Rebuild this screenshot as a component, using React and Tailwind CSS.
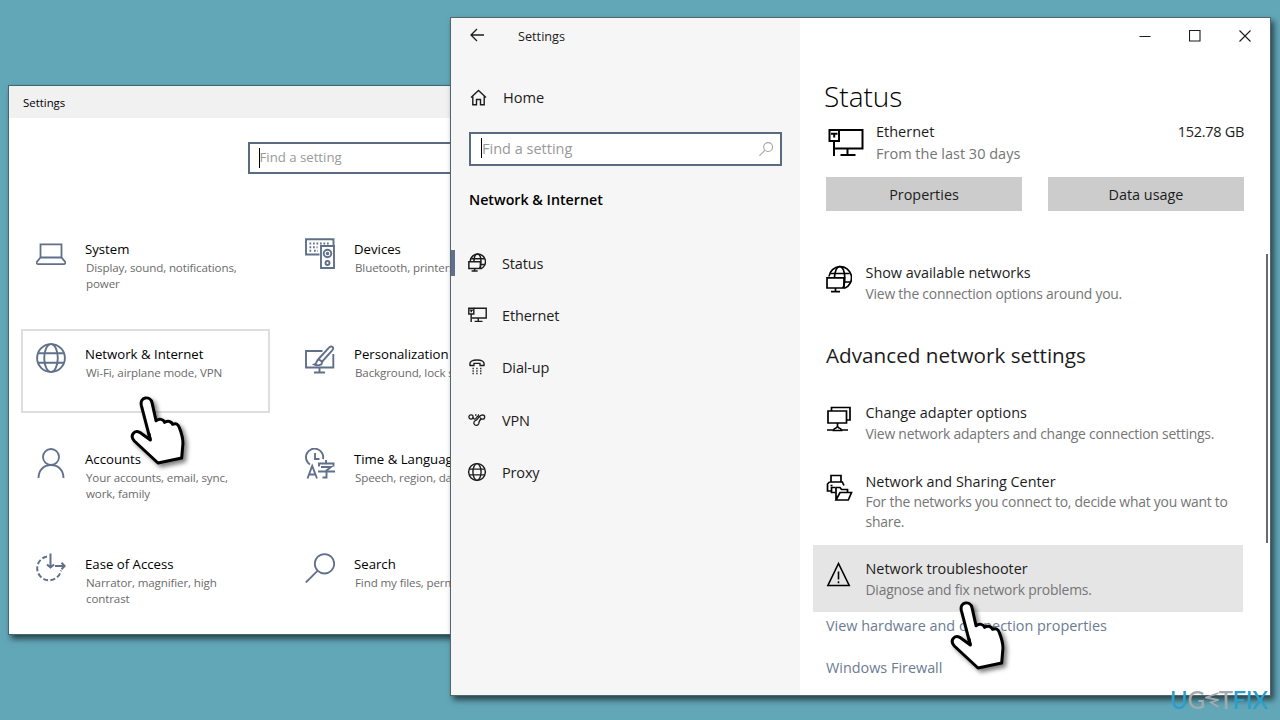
const tiles = [
  { icon: LaptopIcon, title: 'System', text: 'Display, sound, notifications, power' },
  { icon: DevicesIcon, title: 'Devices', text: 'Bluetooth, printers, mouse' },
  { icon: GlobeIcon, title: 'Network & Internet', text: 'Wi-Fi, airplane mode, VPN', active: true },
  { icon: BrushIcon, title: 'Personalization', text: 'Background, lock screen' },
  { icon: UserIcon, title: 'Accounts', text: 'Your accounts, email, sync, work, family' },
  { icon: LanguageIcon, title: 'Time & Language', text: 'Speech, region, date' },
  { icon: EaseIcon, title: 'Ease of Access', text: 'Narrator, magnifier, high contrast' },
  { icon: SearchIcon, title: 'Search', text: 'Find my files, permissions' },
];

const navItems = [
  { icon: NetworkIcon, label: 'Status', active: true },
  { icon: EthernetIcon, label: 'Ethernet' },
  { icon: DialIcon, label: 'Dial-up' },
  { icon: VpnIcon, label: 'VPN' },
  { icon: GlobeIcon, label: 'Proxy' },
];

function Svg({ box, className, width = 1.5, children }) {
  return (
    <svg viewBox={box} className={className} fill="none" stroke="currentColor" strokeWidth={width}>
      {children}
    </svg>
  );
}

function LaptopIcon() {
  return (
    <Svg box="0 0 30 30" className="size-[30px] translate-y-px" width={1.8}>
      <path d="M4.500 18V5.300h21V18M4.500 18.500h21l3.700 4.500c.4 1.400-.2 2.200-1.400 2.200H2.200C1 25.200.4 24.400.8 23z" />
    </Svg>
  );
}

function DevicesIcon() {
  return (
    <Svg box="0 0 30 32" className="h-8 w-[30px]" width={1.9}>
      <path d="M14.500 16.500H1V1.300h27.500v6M16 8h13v22H16z" />
      <path d="M4.500 5.500h21M4.500 9.200h8M4.500 12.800h2M9 12.800h4" strokeDasharray="1.700 1.800" />
      <circle cx="22.500" cy="15.500" r="3.800" />
      <circle cx="22.500" cy="25" r="2" />
      <circle cx="22.500" cy="15.500" r=".8" />
    </Svg>
  );
}

function GlobeIcon({ small }) {
  return (
    <Svg box="0 0 30 30" className={small ? 'size-[18px]' : 'size-[30px]'} width={small ? 2.3 : 1.9}>
      <circle cx="15" cy="15" r="13.900" />
      <ellipse cx="15" cy="15" rx="6.800" ry="13.900" />
      <path d="M2 10.300h26M2 19.700h26" />
    </Svg>
  );
}

function BrushIcon() {
  return (
    <Svg box="0 0 30 30" className="size-[30px] translate-y-0.5" width={1.9}>
      <path d="M17.500 6H1v16.500h27.300V9M14.500 22.500V27M9 27.500h11" />
      <path d="m13.500 14 10.700-11.600c2.600-2.300 5.300.300 3 3L17 16.800c.5 3-3 4.600-7.500 2.700 2.300-.7 1.800-3.500 4-5.500l3.500 2.800" />
    </Svg>
  );
}

function UserIcon() {
  return (
    <Svg box="0 0 30 32" className="h-8 w-[30px]" width={1.8}>
      <circle cx="15" cy="9" r="8" />
      <path d="M2.500 30c0-8 5.500-13 12.500-13s12.500 5 12.500 13" />
    </Svg>
  );
}

function LanguageIcon() {
  return (
    <Svg box="0 0 30 32" className="h-8 w-[30px]" width={1.9}>
      <path d="M5 16.500A8.600 8.600 0 1 1 18 11M10 5v6h4.500" />
      <path d="m2.500 30.500 4.700-12.500L12 30.500M4 26.500h6.500" />
      <path d="M21 12v3M14 18.500v-3h14.500v3M16 19h10l-4.500 3.500v7h-4M13 23.500h17" />
    </Svg>
  );
}

function EaseIcon() {
  return (
    <Svg box="0 0 30 30" className="size-[30px]" width={2}>
      <path d="M11 3.500A12 12 0 1 0 25 17.500" strokeDasharray="5 2.300" />
      <path d="M14.500.500v14M11 11.500l3.500 3 3.500-3M19 13h9.500M25.500 9.800 28.700 13l-3.200 3.200" />
    </Svg>
  );
}

function SearchIcon() {
  return (
    <Svg box="0 0 30 30" className="size-[30px]" width={1.8}>
      <circle cx="19.500" cy="10.800" r="9.700" />
      <path d="M12.500 17.800.800 29.500" />
    </Svg>
  );
}

function NetworkIcon({ small }) {
  return (
    <Svg box="0 0 26 28" className={small ? 'h-[19px] w-[18px]' : 'h-7 w-[26px]'} width={small ? 2.2 : 1.7}>
      <path d="M3 11.500A11.300 11.300 0 1 1 18.500 23.300" />
      <path d="M8.500 12c.3-6 2.500-10.500 5-10.500 3.200 0 5.300 5 5.300 11 0 4.500-.5 8-2 10.500M4.500 8.500h19M18.500 17h5.500" />
      <path d="M1 12.800h17V23H1zM9.500 23v3.500M5 26.700h9" />
    </Svg>
  );
}

function EthernetIcon({ small }) {
  return (
    <Svg box="0 0 36 28" className={small ? 'h-[15px] w-[19px]' : 'h-7 w-9'} width={small ? 2.7 : 2}>
      <path d="M11 2h23.500v18.500H7M19.500 20.500V27M12.500 27h15" />
      <path d="M1.500 2h9.500v11H1.500zM6 13v15" />
      <path d="M3 5.700h6.500M6.200 6v3.500" />
    </Svg>
  );
}

function DialIcon() {
  return (
    <Svg box="0 0 18 18" className="size-[18px]" width={1.3}>
      <path d="M2 7.500C1 3 5 2 9 2s8 1 7 5.500h-4V5.300H6v2.200z" />
      <path d="M4.500 10.500h9M4.500 13h9M4.500 15.500h9" strokeDasharray="1.300 2.500" />
    </Svg>
  );
}

function VpnIcon() {
  return (
    <Svg box="0 0 18 16" className="h-4 w-[18px]" width={1.3}>
      <circle cx="3" cy="5" r="2.100" />
      <path d="M5 5.500c.8 2.200 2.500 2 3.500.2.900-1.700 1.900-2 2.700-1.500" />
      <path d="M7.500 8.500a2.500 2.500 0 1 0 3.200 3.200c.4-2 .9-4.200 2.800-4.700M7.500 8.500c2.800-.7 3.300-5.600 7-5.700a2.200 2.200 0 0 1 0 4.400c-1.200 0-2-.7-2.300-1.700" />
      <path d="M7 3h1.500M10 3h1" />
    </Svg>
  );
}

function AdapterIcon() {
  return (
    <Svg box="0 0 26 28" className="h-7 w-[26px]" width={1.7}>
      <path d="M2 6h18.500v12H2zM5.500 6V2.500H24V15h-3.500M11.500 18v3.500M1 25h6.500M15.500 25H22M7.500 25.500c.3-1.700 1.500-2.300 2.500-2.500l1.500-1.500L13 23c1 .2 2.200.8 2.500 2.500z" />
    </Svg>
  );
}

function SharingIcon() {
  return (
    <Svg box="0 0 27 28" className="h-7 w-[27px]" width={1.7}>
      <path d="M5 8V1.500h10V8M3.500 8h12.800l1.700 3.500M5.500 17h-4v-7l2-2M4.500 11.500h2M9 13.500H5.500v5h4" />
      <path d="M10 25.500V13.500h4l1.500 2h6v3.500M10 26l4-7.500h11.500l-3.200 7.500z" />
    </Svg>
  );
}

function WarningIcon() {
  return (
    <Svg box="0 0 26 28" className="h-7 w-[26px]" width={1.6}>
      <path d="M12.500 2.500 23.200 24.500H1.900zM12.500 10.500v8M12.500 20.300v2" />
    </Svg>
  );
}

function Hand({ className }) {
  return (
    <svg viewBox="0 0 180 225" className={`absolute h-[75px] w-[60px] drop-shadow-[3px_3px_2px_rgba(0,0,0,0.5)] ${className}`}>
      <path
        d="M70 138 43 34C37 8 70 4 75 26l12 54c10-7 22-5 26 5 10-6 20-3 24 6 11-4 17 0 20 10 8 20 13 38 10 56l-3 35-71 15-71-66c-15-16 0-34 16-26z"
        fill="#fff"
        stroke="#000"
        strokeWidth="9"
        strokeLinejoin="round"
      />
      <path d="m70 138-4-19" stroke="#000" strokeWidth="9" />
    </svg>
  );
}

function SettingsHome() {
  return (
    <div className="absolute left-[9px] top-[86px] h-[548px] w-[560px] bg-white shadow-[0_0_0_1px_#3f6873,3px_4px_6px_1px_rgba(0,0,0,0.6)]">
      <div className="flex h-8 items-center bg-[#f1f1f1] pl-3.5 pt-px text-[11.400px] text-black">Settings</div>
      <div className="ml-[238.500px] mt-6 flex h-8 w-[300px] items-center border-2 border-[#5a6a80] pl-[9px]">
        <span className="h-5 w-px bg-black" />
        <span className="text-[13.200px] text-[#999]">Find a setting</span>
      </div>
      <div className="ml-3 mt-[50px] grid grid-cols-[269px_269px] gap-y-[21px]">
        {tiles.map(({ icon: Icon, title, text, active }) => (
          <div
            key={title}
            className={`flex h-[84px] w-[249px] border-2 pl-[13px] pt-3 ${active ? 'border-[#dedede]' : 'border-transparent'}`}
          >
            <div className="w-[49px] shrink-0 text-[#61708a]">
              <Icon />
            </div>
            <div className="w-40 pt-px">
              <div className="whitespace-nowrap text-[13.200px] leading-5 text-black">{title}</div>
              <div className="mt-px pl-px text-[11.600px] leading-4 tracking-[-0.13px] text-[#6b6b6b]">{text}</div>
            </div>
          </div>
        ))}
      </div>
    </div>
  );
}

function Sidebar() {
  return (
    <div className="w-[349px] shrink-0 bg-[#f6f6f6]">
      <div className="flex h-9 items-center pl-[19px]">
        <Svg box="0 0 15 14" className="-mt-0.5 h-3.5 w-[15px]" width={1.3}>
          <path d="M14 7H1M7 1 1 7l6 6" />
        </Svg>
        <span className="ml-[33px] pt-0.5 text-[12.700px]">Settings</span>
      </div>
      <div className="mt-[27px] flex h-8 items-center pl-[19px]">
        <Svg box="0 0 17 17" className="size-[17px]" width={1.4}>
          <path d="M1 8.500 8.500 1.500 16 8.500M2.800 7.500V15.800h3.700v-5.300h4v5.300h3.700V7.500" />
        </Svg>
        <span className="ml-4 pt-0.5 text-[14.600px]">Home</span>
      </div>
      <div className="ml-[18px] mt-[19px] flex h-[34px] w-[313px] items-center border-2 border-[#5a6a80] bg-white pl-[10px] pr-[7px]">
        <span className="-mt-0.5 h-5 w-px bg-black" />
        <span className="pb-px text-[14.500px] text-[#999]">Find a setting</span>
        <Svg box="0 0 30 30" className="ml-auto size-3.5 text-[#a5a5a5]" width={2.3}>
          <circle cx="19.500" cy="10.800" r="9.500" />
          <path d="M12.500 17.800.800 29.500" />
        </Svg>
      </div>
      <div className="ml-[18px] mt-[22.500px] text-[14.250px] font-semibold leading-[22px] text-black">Network & Internet</div>
      <div className="mt-[26px]">
        {navItems.map(({ icon: Icon, label, active }) => (
          <div key={label} className="flex h-[52.300px] items-center">
            <span className={`h-[26px] w-1 ${active ? 'bg-[#61708a]' : ''}`} />
            <span className="flex w-[47px] pl-[13px]">
              <Icon small />
            </span>
            <span className="pt-0.5 text-[14.500px] tracking-[-0.150px]">{label}</span>
          </div>
        ))}
      </div>
    </div>
  );
}

function Option({ icon: Icon, title, text, className, textClass = 'leading-[21px]' }) {
  return (
    <div className={`flex ${className}`}>
      <div className="w-[39.500px] shrink-0 pt-[3px] text-black">
        <Icon />
      </div>
      <div>
        <div className="text-[14.400px] leading-[21px]">{title}</div>
        <div className={`text-[13.900px] tracking-[-0.220px] text-[#757575] ${textClass}`}>{text}</div>
      </div>
    </div>
  );
}

function StatusPane() {
  return (
    <div className="relative flex-1 bg-white pl-[26px] pr-[26px]">
      <div className="-mr-[7px] flex h-9 items-center justify-end gap-[38px]">
        <Svg box="0 0 12 12" className="size-3" width={1}>
          <path d="M.500 6.500h11" />
        </Svg>
        <Svg box="0 0 12 12" className="size-3" width={1.1}>
          <path d="M.500.500h10.500v10.500H.500z" />
        </Svg>
        <Svg box="0 0 12 12" className="size-3" width={1.1}>
          <path d="m.500.500 11 11m0-11-11 11" />
        </Svg>
      </div>
      <h1 className="-ml-[2px] mt-[22px] text-[28px] font-light leading-10 text-black">Status</h1>
      <div className="mt-[5px] flex text-[14.500px] leading-[22px]">
        <div className="w-[50px] pl-[1.500px] pt-[7px] text-black">
          <EthernetIcon />
        </div>
        <div>
          <div>Ethernet</div>
          <div className="text-[#757575]">From the last 30 days</div>
        </div>
        <div className="ml-auto tracking-[-0.300px]">152.78 GB</div>
      </div>
      <div className="mt-3 flex justify-between text-[14.400px]">
        <button className="h-[34px] w-[196px] bg-[#ccc] pt-0.5">Properties</button>
        <button className="h-[34px] w-[196px] bg-[#ccc] pt-0.5">Data usage</button>
      </div>
      <Option icon={NetworkIcon} title="Show available networks" text="View the connection options around you." className="mt-[51px]" />
      <h2 className="mt-9 text-[20.700px] leading-[30px]">Advanced network settings</h2>
      <Option
        icon={AdapterIcon}
        title="Change adapter options"
        text="View network adapters and change connection settings."
        className="mt-8"
      />
      <Option
        icon={SharingIcon}
        title="Network and Sharing Center"
        text="For the networks you connect to, decide what you want to share."
        className="mt-[27px]"
        textClass="leading-[19.500px]"
      />
      <Option
        icon={WarningIcon}
        title="Network troubleshooter"
        text="Diagnose and fix network problems."
        className="-ml-[13px] mt-[14px] h-[67px] w-[430px] bg-[#e5e5e5] pl-[13px] pt-[13px]"
      />
      <div className="mt-[3px] text-[14.400px] leading-[22px] text-[#6c7b94]">View hardware and connection properties</div>
      <div className="mt-5 text-[14.400px] leading-[22px] text-[#6c7b94]">Windows Firewall</div>
      <div className="absolute right-0.5 top-[236px] h-[289px] w-0.5 bg-[#6a6a6a]" />
    </div>
  );
}

function Watermark() {
  return (
    <div className="absolute left-[1170px] top-[685px] flex h-[30px] items-center font-[Lato,sans-serif] text-[24px] font-medium leading-[30px] tracking-[-0.300px] text-[#2a9fcb]">
      <span>U</span>
      <span className="text-[#a3aaad]">G</span>
      <svg viewBox="0 0 14 18" className="h-[18px] w-3.5 text-[#a3aaad]" fill="none" stroke="currentColor" strokeWidth="1.800">
        <path d="M13.500 2 1 6.500 13 9 6 11.500 13.500 16" />
      </svg>
      <span className="text-[#a3aaad]">T</span>
      <span>FIX</span>
    </div>
  );
}

export default function App() {
  return (
    <div className="relative h-[720px] w-[1280px] overflow-hidden bg-[#62a7b8] font-['Open_Sans',sans-serif] text-[#1c1c1c]">
      <SettingsHome />
      <div className="absolute left-[451px] top-[18px] flex h-[677px] w-[819px] shadow-[0_0_0_1px_#52666c,3px_4px_6px_1px_rgba(0,0,0,0.6)]">
        <Sidebar />
        <StatusPane />
      </div>
      <Hand className="left-[127px] top-[394px]" />
      <Hand className="left-[947px] top-[599px]" />
      <Watermark />
    </div>
  );
}
